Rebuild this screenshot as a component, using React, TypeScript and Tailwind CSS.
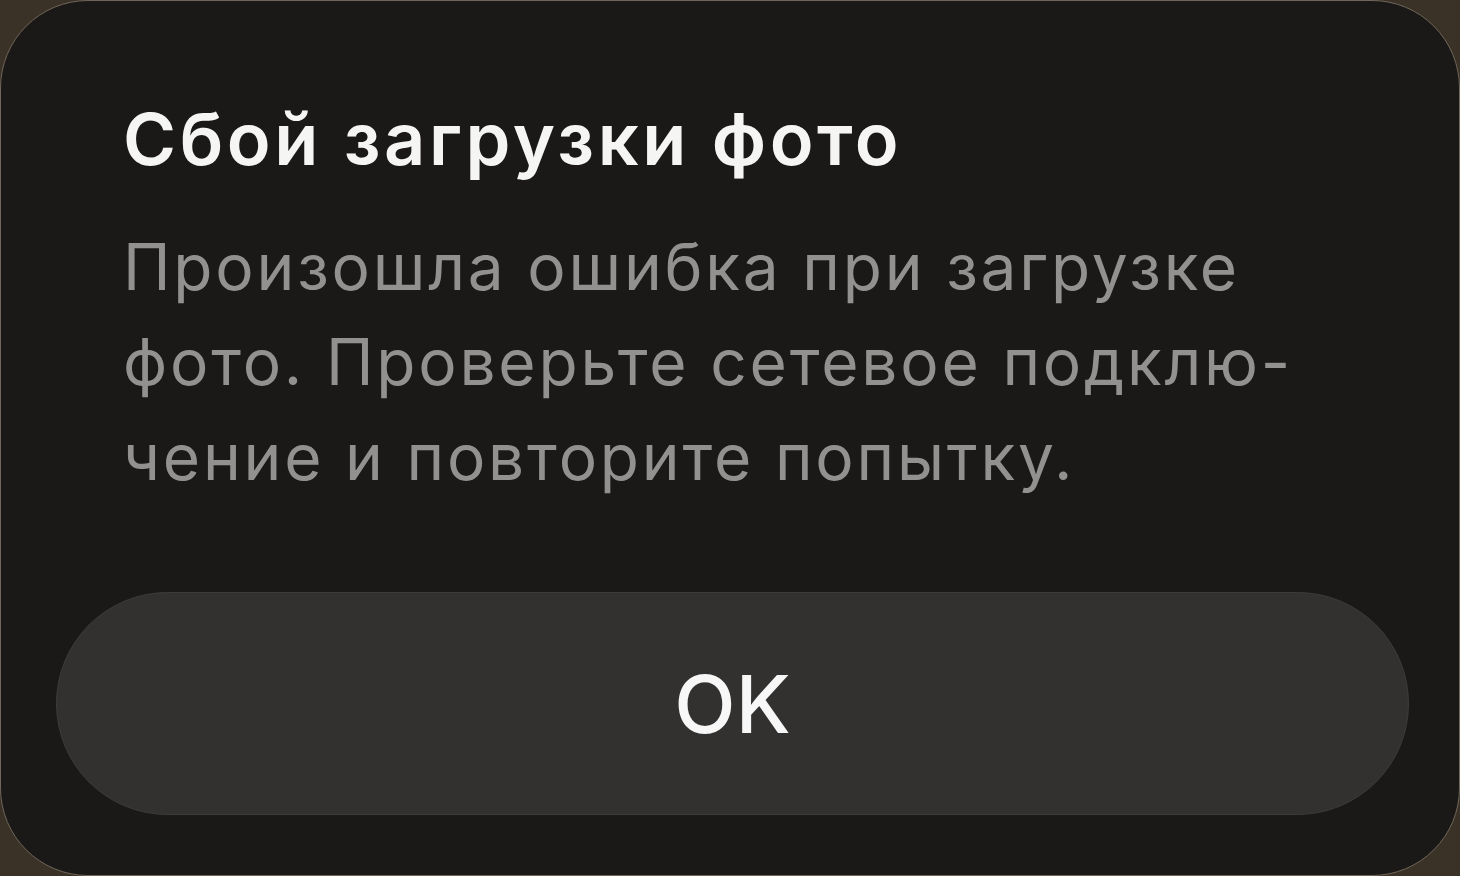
export default function App() {
  return (
    <div className="h-[876px] w-[1460px] overflow-hidden bg-[#3a3127] font-['Inter','Noto_Sans',sans-serif]">
      <div className="flex h-[876px] w-[1460px] flex-col rounded-[88px] border border-[#70665a] bg-[#1b1917]">
        <div className="pl-[122px] pt-[94px]">
          <h1 className="text-[72px] font-semibold leading-[88px] tracking-[3.6px] text-[#f5f5f4]">Сбой загрузки фото</h1>
          <p className="mt-[36px] text-[64px] leading-[95px] tracking-[2.8px] text-[#939190]">
            Произошла ошибка при загрузке
            <br />
            фото. Проверьте сетевое подклю-
            <br />
            чение и повторите попытку.
          </p>
        </div>
        <div className="ml-[55px] mr-[50px] mt-[88px]">
          <button className="flex h-[223px] w-full items-center justify-center rounded-full border border-[#3e3c3a] bg-[#323130] text-[80px] font-medium text-[#f7f7f7]">
            OK
          </button>
        </div>
      </div>
    </div>
  );
}
